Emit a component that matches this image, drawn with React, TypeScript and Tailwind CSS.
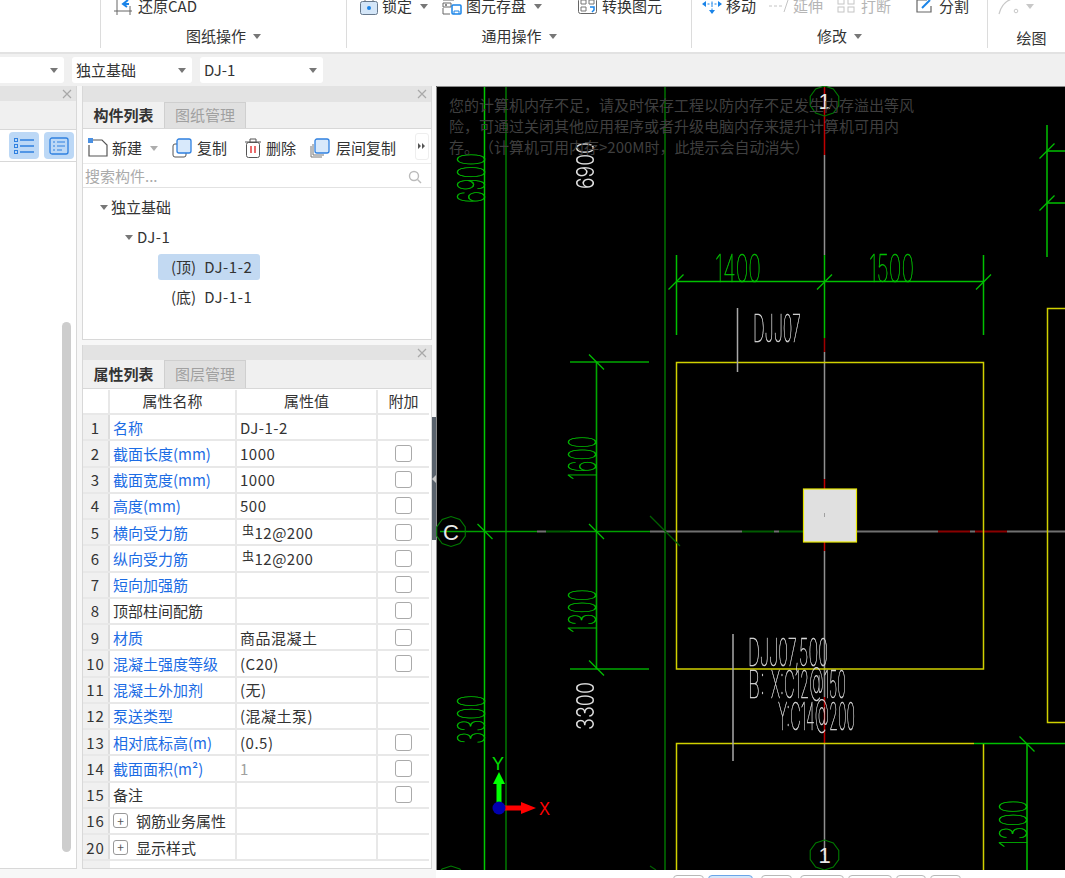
import type { ReactNode } from 'react';

const FONT = "font-['Noto_Sans_CJK_SC','Noto_Sans',sans-serif]";
const G = '#00c000';
const Y = '#d0d000';

type Row = { n: number; name: string; value?: string; check?: boolean; blue?: boolean; plus?: boolean; rebar?: boolean; muted?: boolean };

const rows: Row[] = [
  { n: 1, name: '名称', value: 'DJ-1-2', blue: true },
  { n: 2, name: '截面长度(mm)', value: '1000', check: true, blue: true },
  { n: 3, name: '截面宽度(mm)', value: '1000', check: true, blue: true },
  { n: 4, name: '高度(mm)', value: '500', check: true, blue: true },
  { n: 5, name: '横向受力筋', value: '12@200', check: true, blue: true, rebar: true },
  { n: 6, name: '纵向受力筋', value: '12@200', check: true, blue: true, rebar: true },
  { n: 7, name: '短向加强筋', check: true, blue: true },
  { n: 8, name: '顶部柱间配筋', check: true },
  { n: 9, name: '材质', value: '商品混凝土', check: true, blue: true },
  { n: 10, name: '混凝土强度等级', value: '(C20)', check: true, blue: true },
  { n: 11, name: '混凝土外加剂', value: '(无)', blue: true },
  { n: 12, name: '泵送类型', value: '(混凝土泵)', blue: true },
  { n: 13, name: '相对底标高(m)', value: '(0.5)', check: true, blue: true },
  { n: 14, name: '截面面积(m²)', value: '1', check: true, blue: true, muted: true },
  { n: 15, name: '备注', check: true },
  { n: 16, name: '钢筋业务属性', plus: true },
  { n: 20, name: '显示样式', plus: true },
];

function Caret({ className = '' }: { className?: string }) {
  return (
    <svg width="8" height="5" viewBox="0 0 8 5" className={className}>
      <path d="M0 0h8L4 5z" fill="#777" />
    </svg>
  );
}

function Close() {
  return (
    <svg width="10" height="10" viewBox="0 0 10 10" className="mr-[4px]">
      <path d="M1 1l8 8M9 1l-8 8" stroke="#a8a8a8" strokeWidth="1.2" />
    </svg>
  );
}

function PanelHeader({ className = 'h-[15px]' }: { className?: string }) {
  return (
    <div className={`flex items-center justify-end bg-[#e3e3e3] ${className}`}>
      <Close />
    </div>
  );
}

function Tabs({ first, second, className }: { first: string; second: string; className: string }) {
  return (
    <div className={`flex bg-[#f0f0f0] border-b border-[#d8d8d8] ${className}`}>
      <div className="flex w-[81px] items-center justify-center text-[15px] font-bold text-[#333]">{first}</div>
      <div className="flex w-[82px] items-center justify-center border border-b-0 border-[#cfcfcf] bg-[#e0e0e0] text-[15px] text-[#a0a0a0]">
        {second}
      </div>
    </div>
  );
}

function RibbonItem({ icon, label, muted, caret, className = '' }: { icon: ReactNode; label: string; muted?: boolean; caret?: boolean; className?: string }) {
  return (
    <div className={`flex items-center gap-[4px] whitespace-nowrap text-[15px] ${muted ? 'text-[#b5b5b5]' : 'text-[#333]'} ${className}`}>
      {icon}
      <span>{label}</span>
      {caret && <Caret className="ml-[4px]" />}
    </div>
  );
}

function GroupLabel({ text, caret = true }: { text: string; caret?: boolean }) {
  return (
    <div className="flex h-[24px] items-center justify-center gap-[7px] text-[15px] text-[#333]">
      <span>{text}</span>
      {caret && <Caret />}
    </div>
  );
}

const restoreIcon = (
  <svg width="18" height="20" viewBox="0 0 18 20" fill="none" className="mr-[2px]">
    <path d="M3 0v19M0 15h18M16 10v9" stroke="#666" />
    <path d="M14 4l-5 4 4 3M9 8h6" stroke="#1a84e8" strokeWidth="2" />
  </svg>
);
const lockIcon = (
  <svg width="18" height="20" viewBox="0 0 18 20" fill="none">
    <path d="M5 6V3a4 4 0 018 0v3" stroke="#777" />
    <rect x="0.5" y="5.5" width="17" height="13" rx="2" fill="#d4e6f8" stroke="#66788c" />
    <circle cx="9" cy="12" r="2" fill="#1a84e8" />
  </svg>
);
const storeIcon = (
  <svg width="20" height="20" viewBox="0 0 20 20" fill="none">
    <path d="M1 0h11v4H1zM1 7h8v4H1zM1 12v6h7" stroke="#666" />
    <circle cx="4" cy="9" r="1" fill="#666" />
    <rect x="10" y="9" width="9" height="9" rx="1" stroke="#1a84e8" strokeWidth="1.5" />
    <path d="M12 18v-3h5v3" stroke="#1a84e8" />
  </svg>
);
const convertIcon = (
  <svg width="20" height="20" viewBox="0 0 20 20" fill="none">
    <rect x="0.5" y="2.5" width="18" height="15" rx="2" stroke="#666" />
    <path d="M3 4h5v4H3zM11 4h5v4h-5zM3 11h5v4H3z" stroke="#777" />
    <path d="M12 11h4v3l-2 2" stroke="#1a84e8" strokeWidth="1.5" />
  </svg>
);
const moveIcon = (
  <svg width="20" height="16" viewBox="0 0 20 16" fill="none">
    <path d="M10 0v15M2 6h16" stroke="#1a84e8" strokeDasharray="2 1.5" />
    <path d="M0 6l4-3v6zM20 6l-4-3v6zM10 16l-3-4h6z" fill="#1a84e8" />
  </svg>
);
const extendIcon = (
  <svg width="20" height="14" viewBox="0 0 20 14" fill="none">
    <path d="M0 7h3M5 7h3M10 7h3M19 1l-4 12" stroke="#c4c4c4" />
  </svg>
);
const breakIcon = (
  <svg width="20" height="16" viewBox="0 0 20 16" fill="none">
    <rect x="1" y="1" width="6" height="5" stroke="#c4c4c4" />
    <rect x="11" y="1" width="6" height="5" stroke="#c4c4c4" />
    <rect x="1" y="9" width="6" height="5" stroke="#c4c4c4" />
    <rect x="11" y="9" width="6" height="5" stroke="#c4c4c4" />
  </svg>
);
const splitIcon = (
  <svg width="20" height="16" viewBox="0 0 20 16" fill="none">
    <path d="M12 2H2v12h14V8" stroke="#666" strokeWidth="1.2" />
    <path d="M7 10l8-8" stroke="#1a84e8" strokeWidth="2" />
  </svg>
);

function Ribbon() {
  const topRow = '-mt-[12px] flex h-[36px] items-center';
  return (
    <div className="flex h-[54px] shrink-0 overflow-hidden border-b-2 border-[#e2e2e2] bg-white">
      <div className="w-[101px] border-r border-[#dcdcdc] h-[48px]" />
      <div className="w-[246px] border-r border-[#dcdcdc] h-[48px]">
        <div className={`${topRow} pl-[13px]`}>
          <RibbonItem icon={restoreIcon} label="还原CAD" />
        </div>
        <GroupLabel text="图纸操作" />
      </div>
      <div className="w-[345px] border-r border-[#dcdcdc] h-[48px]">
        <div className={`${topRow} pl-[13px]`}>
          <RibbonItem icon={lockIcon} label="锁定" caret className="w-[82px]" />
          <RibbonItem icon={storeIcon} label="图元存盘" caret className="w-[136px]" />
          <RibbonItem icon={convertIcon} label="转换图元" />
        </div>
        <GroupLabel text="通用操作" />
      </div>
      <div className="w-[296px] border-r border-[#dcdcdc] h-[48px]">
        <div className={`${topRow} pl-[10px]`}>
          <RibbonItem icon={moveIcon} label="移动" className="w-[67px]" />
          <RibbonItem icon={extendIcon} label="延伸" muted className="w-[68px]" />
          <RibbonItem icon={breakIcon} label="打断" muted className="w-[78px]" />
          <RibbonItem icon={splitIcon} label="分割" />
        </div>
        <GroupLabel text="修改" />
      </div>
      <div className="flex-1">
        <div className={`${topRow} gap-[4px] pl-[10px]`}>
          <svg width="24" height="18" viewBox="0 0 24 18" fill="none">
            <path d="M1 17C3 9 7 4 14 2" stroke="#c8c8c8" strokeWidth="1.2" />
            <circle cx="18" cy="14" r="1.8" stroke="#c8c8c8" />
          </svg>
          <Caret className="opacity-40" />
        </div>
        <div className="mt-[2px] flex h-[24px] items-center justify-center pl-[10px] text-[15px] text-[#333]">绘图</div>
      </div>
    </div>
  );
}

function Select({ text, className }: { text?: string; className: string }) {
  return (
    <div className={`flex h-[26px] items-center justify-between rounded-[3px] bg-white pl-[4px] pr-[6px] text-[15px] text-[#333] ${className}`}>
      <span>{text}</span>
      <Caret />
    </div>
  );
}

function ComponentList() {
  const toolText = 'text-[15px] text-[#333] whitespace-nowrap';
  return (
    <section className="h-[254px] border-x border-b border-[#d8d8d8] bg-white flex flex-col">
      <PanelHeader className="h-[16px]" />
      <Tabs first="构件列表" second="图纸管理" className="h-[27px]" />
      <div className="flex h-[35px] items-center border-b border-[#ececec] pl-[5px] pt-[4px]">
        <svg width="20" height="20" viewBox="0 0 20 20" fill="none">
          <path d="M4 2h10l5 5v11H1V7" stroke="#555" strokeWidth="1.2" />
          <rect x="0" y="0" width="5" height="5" fill="#4a90e2" />
        </svg>
        <span className={`ml-[4px] ${toolText}`}>新建</span>
        <Caret className="ml-[8px] opacity-60" />
        <svg width="20" height="20" viewBox="0 0 20 20" fill="none" className="ml-[14px]">
          <rect x="1" y="6" width="13" height="13" rx="2" stroke="#555" />
          <rect x="5" y="1" width="14" height="14" rx="2" fill="#d8e9fb" stroke="#2f80e0" strokeWidth="1.3" />
        </svg>
        <span className={`ml-[5px] ${toolText}`}>复制</span>
        <svg width="18" height="20" viewBox="0 0 18 20" fill="none" className="ml-[17px]">
          <path d="M1 4h16M6 4V1h6v3" stroke="#555" />
          <rect x="2.5" y="4.5" width="13" height="15" rx="2" stroke="#555" />
          <path d="M7 8v7M11 8v7" stroke="#e03030" strokeWidth="1.4" />
        </svg>
        <span className={`ml-[4px] ${toolText}`}>删除</span>
        <svg width="20" height="20" viewBox="0 0 20 20" fill="none" className="ml-[14px]">
          <path d="M1 8v11h11M3 6v11h11" stroke="#777" />
          <rect x="5" y="1" width="14" height="14" rx="2" fill="#d8e9fb" stroke="#2f80e0" strokeWidth="1.3" />
        </svg>
        <span className={`ml-[6px] ${toolText}`}>层间复制</span>
        <div className="ml-[19px] flex h-[27px] w-[14px] -translate-y-[2px] items-center justify-center rounded-[3px] border border-[#eeeeee] bg-white">
          <svg width="8" height="6" viewBox="0 0 8 6">
            <path d="M0 0l3 3-3 3zM4 0l3 3-3 3z" fill="#555" />
          </svg>
        </div>
      </div>
      <div className="flex h-[24px] items-center justify-between border-b border-[#e2e2e2] pl-[2px] pr-[9px] pt-[2px]">
        <span className="text-[15px] text-[#aaaaaa]">搜索构件...</span>
        <svg width="14" height="14" viewBox="0 0 14 14" fill="none">
          <circle cx="6" cy="6" r="4.5" stroke="#bbbbbb" strokeWidth="1.4" />
          <path d="M9.5 9.5L13 13" stroke="#bbbbbb" strokeWidth="1.4" />
        </svg>
      </div>
      <div className="flex flex-col pt-[4px] text-[15px] text-[#333]">
        <div className="flex h-[30px] items-center gap-[3px] pl-[17px]">
          <Caret />
          <span>独立基础</span>
        </div>
        <div className="flex h-[30px] items-center gap-[4px] pl-[42px]">
          <Caret />
          <span className="tracking-[0.5px]">DJ-1</span>
        </div>
        <div className="flex h-[30px] items-center pl-[75px]">
          <span className="flex h-[26px] w-[102px] items-center rounded-[3px] bg-[#c2d9f2] pl-[13px]">
            (顶)<span className="ml-[8px] tracking-[0.6px]">DJ-1-2</span>
          </span>
        </div>
        <div className="flex h-[30px] items-center pl-[88px]">
          (底)<span className="ml-[8px] tracking-[0.6px]">DJ-1-1</span>
        </div>
      </div>
    </section>
  );
}

function PropertyRow({ row }: { row: Row }) {
  return (
    <div className="grid h-[26.25px] w-[346px] grid-cols-[27px_127px_141px_51px] border-b-2 border-[#e8e8e8] text-[15px] leading-none">
      <div className="flex items-center justify-center border-r-2 border-[#dddddd] bg-[#f0f0f0] tracking-[1px] text-[#333]">{row.n}</div>
      <div className={`flex items-center border-r-2 border-[#e8e8e8] pl-[3px] whitespace-nowrap ${row.blue ? 'text-[#1c6ce4]' : 'text-[#333]'}`}>
        {row.plus && (
          <span className="mr-[8px] flex h-[15px] w-[15px] items-center justify-center rounded-[3px] border border-[#999] text-[12px] text-[#555]">+</span>
        )}
        {row.name}
      </div>
      <div className={`flex items-center border-r-2 border-[#e8e8e8] pl-[3px] ${row.muted ? 'text-[#a0a0a0]' : 'text-[#333]'} tracking-[0.5px]`}>
        {row.rebar && <span className="ml-[2px] -mt-[4px] text-[12px]">虫</span>}
        {row.value}
      </div>
      <div className="flex items-center justify-center">
        {row.check && <span className="h-[17px] w-[17px] rounded-[3px] border border-[#aaaaaa] bg-white" />}
      </div>
    </div>
  );
}

function PropertyList() {
  return (
    <section className="mt-[5px] flex h-[524px] flex-col border-x border-b border-[#d8d8d8] bg-white">
      <PanelHeader />
      <Tabs first="属性列表" second="图层管理" className="h-[29px]" />
      <div className="grid h-[26px] w-[346px] grid-cols-[27px_127px_141px_51px] border-b-2 border-[#e8e8e8] pt-[1px] text-[15px] text-[#333]">
        <div className="border-r-2 border-[#e8e8e8]" />
        <div className="flex items-center justify-center border-r-2 border-[#e8e8e8]">属性名称</div>
        <div className="flex items-center justify-center border-r-2 border-[#e8e8e8]">属性值</div>
        <div className="flex items-center justify-center">附加</div>
      </div>
      {rows.map((r) => (
        <PropertyRow key={r.n} row={r} />
      ))}
      <div className="w-[27px] flex-1 bg-[#f0f0f0]" />
    </section>
  );
}

function Slash({ x, y, r = 7.5, c = G, w = 1.3 }: { x: number; y: number; r?: number; c?: string; w?: number }) {
  return <line x1={x - r} y1={y + r} x2={x + r} y2={y - r} stroke={c} strokeWidth={w} />;
}

function BackSlash({ x, y, r = 7.5, c = G }: { x: number; y: number; r?: number; c?: string }) {
  return <line x1={x - r} y1={y - r} x2={x + r} y2={y + r} stroke={c} strokeWidth="1.3" />;
}

function CadText({ x, y, len, size, text, color = G, rotate = false, weight = 100, bold = 0.5 }: { x: number; y: number; len: number; size: number; text: string; color?: string; rotate?: boolean; weight?: number; bold?: number }) {
  return (
    <text
      transform={`translate(${x} ${y})${rotate ? ' rotate(-90)' : ''}`}
      textLength={len}
      lengthAdjust="spacingAndGlyphs"
      fontSize={size}
      fontWeight={weight}
      fontFamily="Inter, 'Liberation Sans', sans-serif"
      fill={color}
      stroke={color}
      strokeWidth={bold}
      className="blur-[0.3px]"
    >
      {text}
    </text>
  );
}

function AxisBubble({ x, y, label }: { x: number; y: number; label: string }) {
  const points = Array.from({ length: 10 }, (_, i) => {
    const a = (i * Math.PI) / 5 + Math.PI / 10;
    return `${x + 15 * Math.cos(a)},${y + 15 * Math.sin(a)}`;
  }).join(' ');
  return (
    <g>
      <polygon points={points} fill="none" stroke="#007a00" strokeWidth="1.1" />
      <text x={x} y={y + 8} textAnchor="middle" fontSize="22" fontFamily="'Liberation Sans', sans-serif" fill="#e8e8e8">
        {label}
      </text>
    </g>
  );
}

function CadDrawing() {
  return (
    <svg viewBox="436 86 629 784" className="block h-full w-full">
      <rect x="436" y="86" width="629" height="784" fill="#000" />
      <path d="M436.5 870V86.5H1065" fill="none" stroke="#8a8a8a" />
      {/* grid lines */}
      <path d="M484.5 87V870" stroke="#00c800" strokeWidth="1.5" />
      <path d="M506 87V870" stroke="#007800" strokeWidth="1.5" />
      <path d="M665 87V870" stroke="#005f00" strokeWidth="1.8" />

      {/* vertical axis */}
      <path d="M824.5 87V155" stroke="#c00000" strokeWidth="1.5" />
      <path d="M824.5 155V255" stroke="#909090" strokeWidth="1.5" />
      <path d="M824.5 255V338" stroke={G} strokeWidth="1.5" />
      <path d="M824.5 338V352" stroke="#a00000" strokeWidth="1.5" />
      <path d="M824.5 352V479M824.5 551V697M824.5 743V855" stroke="#909090" strokeWidth="1.5" />
      <path d="M824.5 479V489M824.5 542V551M824.5 697V743" stroke="#c00000" strokeWidth="1.5" />

      {/* horizontal axis */}
      <path d="M440 531.5H537M570 531.5H650" stroke="#00a000" strokeWidth="1.5" />
      <path d="M546 531.5H570M742 531.5H774M779 531.5H803" stroke="#005a00" strokeWidth="1.8" />
      <path d="M537 531.5H546M650 531.5H742M774 531.5H779M856 531.5H938M970 531.5H975M1007 531.5H1065" stroke="#707070" strokeWidth="1.8" />
      <path d="M938 531.5H970M975 531.5H1007" stroke="#8a0000" strokeWidth="2" />

      {/* footings */}
      <path d="M676.5 362.5H983.5V669H676.5Z" fill="none" stroke={Y} strokeWidth="1.5" />
      <path d="M676.5 870V743.5H974M983.5 743.5V870" fill="none" stroke={Y} strokeWidth="1.5" />
      <path d="M1065 308.5H1047.5V722.5H1065" fill="none" stroke={Y} strokeWidth="1.5" />
      <path d="M974 743.5H1065M1027 743.5V870" stroke={G} strokeWidth="1.5" />
      <BackSlash x={1027} y={744} />

      {/* dimensions */}
      <path d="M676.5 255V335M983.5 255V335M676 281.5H984" stroke={G} strokeWidth="1.5" />
      <Slash x={676} y={282} />
      <Slash x={824.5} y={282} />
      <Slash x={983.5} y={282} />
      <CadText x={715} y={282} len={46} size={38} text="1400" />
      <CadText x={869} y={282} len={45} size={38} text="1500" />

      <path d="M596.5 362V669M570 362H649M570 669H649" stroke="#00a800" strokeWidth="1.6" />
      <BackSlash x={596.5} y={362} />
      <BackSlash x={596.5} y={531.5} />
      <BackSlash x={596.5} y={668} />
      <BackSlash x={485} y={531.5} />
      <line x1="650" y1="516" x2="680" y2="546" stroke="#006000" strokeWidth="1.2" />
      <line x1="650" y1="866" x2="656" y2="870" stroke="#006000" strokeWidth="1.2" />
      <CadText x={596} y={480} len={44} size={38} text="1600" rotate />
      <CadText x={596} y={633} len={44} size={38} text="1300" rotate />
      <CadText x={485} y={203} len={50} size={38} text="6900" rotate />
      <CadText x={485} y={744} len={49} size={38} text="3300" rotate />
      <CadText x={1027} y={848} len={48} size={38} text="1300" rotate />
      <CadText x={594} y={189} len={47} size={24} text="6900" color="#e0e0e0" rotate weight={300} bold={0} />
      <CadText x={594} y={730} len={48} size={24} text="3300" color="#e0e0e0" rotate weight={300} bold={0} />

      <path d="M1047 125V257M1047 151H1065M1047 203H1065" stroke={G} strokeWidth="1.5" />
      <Slash x={1047} y={151} />
      <Slash x={1047} y={203} />

      {/* column */}
      <rect x="803.5" y="489" width="53" height="53" fill="#e0e0e0" stroke="#e6e600" strokeWidth="1.2" />
      <path d="M824.5 513V517" stroke="#a0a0a0" />

      {/* labels */}
      <path d="M737.5 308V372M733 634V761" stroke="#a8a8a8" strokeWidth="1.5" />
      <CadText x={753} y={342} len={48} size={38} text="DJJ07" color="#d8d8d8" />
      <CadText x={748} y={666} len={80} size={38} text="DJJ07,500" color="#d8d8d8" />
      <CadText x={748} y={698} len={17} size={38} text="B:" color="#d8d8d8" />
      <CadText x={771} y={698} len={75} size={38} text="X:C12@150" color="#d8d8d8" />
      <CadText x={778} y={730} len={77} size={38} text="Y:C14@200" color="#d8d8d8" />

      <AxisBubble x={824.5} y={101} label="1" />
      <AxisBubble x={824.5} y={855} label="1" />
      <AxisBubble x={451} y={531.5} label="C" />
      <AxisBubble x={451} y={881} label="" />

      {/* ucs */}
      <path d="M499 808V784" stroke="#00ff00" strokeWidth="5" />
      <path d="M499 772l6 12h-12z" fill="#00ff00" />
      <path d="M499 808H521" stroke="#ff0000" strokeWidth="5" />
      <path d="M536 808l-15-6v12z" fill="#ff0000" />
      <circle cx="499" cy="808" r="6.5" fill="#0000b0" />
      <text x="492" y="770" fontSize="18" fontFamily="'Liberation Sans', sans-serif" fill="#00e000" textLength="12" lengthAdjust="spacingAndGlyphs">Y</text>
      <text x="539" y="815" fontSize="18" fontFamily="'Liberation Sans', sans-serif" fill="#ff0000" textLength="11" lengthAdjust="spacingAndGlyphs">X</text>
    </svg>
  );
}

export default function App() {
  return (
    <div className={`flex h-[878px] w-[1065px] flex-col overflow-hidden bg-[#f7f7f7] ${FONT}`}>
      <Ribbon />
      <div className="flex h-[32px] shrink-0 items-center gap-[8px] bg-[#f0f0f0]">
        <Select className="-ml-[2px] w-[66px]" />
        <Select text="独立基础" className="w-[120px]" />
        <Select text="DJ-1" className="w-[123px]" />
      </div>
      <div className="flex min-h-0 flex-1">
        <aside className="relative flex h-[783px] w-[77px] shrink-0 flex-col border-r border-b border-[#d8d8d8] bg-white">
          <PanelHeader />
          <div className="h-[29px] border-b border-[#d8d8d8] bg-[#f0f0f0]" />
          <div className="flex h-[32px] items-center gap-[5px] border-b border-[#d8d8d8] pl-[9px]">
            <span className="flex h-[27px] w-[30px] items-center justify-center rounded-[4px] bg-[#bcd8f6]">
              <svg width="20" height="16" viewBox="0 0 20 16" fill="none" stroke="#2f80e0">
                <path d="M6 2h14M6 8h14M6 14h14" strokeWidth="1.3" />
                <rect x="0.5" y="0.5" width="3" height="3" />
                <rect x="0.5" y="6.5" width="3" height="3" />
                <rect x="0.5" y="12.5" width="3" height="3" />
              </svg>
            </span>
            <span className="flex h-[27px] w-[30px] items-center justify-center rounded-[4px] bg-[#bcd8f6]">
              <svg width="20" height="18" viewBox="0 0 20 18" fill="none" stroke="#2f80e0">
                <rect x="1" y="1" width="18" height="16" rx="2" strokeWidth="1.3" />
                <path d="M4 5h2M8 5h8M4 9h2M8 9h8M4 13h2M8 13h5" />
              </svg>
            </span>
          </div>
          <div className="absolute left-[62px] top-[236px] h-[530px] w-[9px] rounded-[5px] bg-[#cdcdcd]" />
        </aside>
        <div className="ml-[5px] w-[350px] shrink-0">
          <ComponentList />
          <PropertyList />
        </div>
        <div className="flex w-[4px] shrink-0 flex-col">
          <div className="mt-[331px] flex h-[123px] items-center justify-center bg-[#59626c]">
            <span className="h-0 w-0 border-y-[4px] border-r-[4px] border-y-transparent border-r-[#c8c8c8]" />
          </div>
        </div>
        <div className="flex min-w-0 flex-1 flex-col bg-white">
          <div className="relative h-[784px] shrink-0">
            <CadDrawing />
            <div className="absolute left-[13px] top-[8px] w-[470px] text-[15px] leading-[21px] text-[#3f3f3f] [text-spacing-trim:space-all]">
              您的计算机内存不足，请及时保存工程以防内存不足发生内存溢出等风险，可通过关闭其他应用程序或者升级电脑内存来提升计算机可用内存。（计算机可用内存&gt;200M时，此提示会自动消失）
            </div>
          </div>
          <div className="flex gap-[4px] pl-[237px] pt-[5px]">
            <span className="h-[12px] w-[31px] rounded-t-[4px] border border-[#b8b8b8] bg-white" />
            <span className="h-[12px] w-[45px] rounded-t-[4px] border border-[#6aa5e8] bg-[#d6e7fa]" />
            <span className="ml-[4px] h-[12px] w-[31px] rounded-t-[4px] border border-[#b8b8b8] bg-white" />
            <span className="ml-[4px] h-[12px] w-[44px] rounded-t-[4px] border border-[#b8b8b8] bg-white" />
            <span className="h-[12px] w-[44px] rounded-t-[4px] border border-[#b8b8b8] bg-white" />
            <span className="h-[12px] w-[30px] rounded-t-[4px] border border-[#b8b8b8] bg-white" />
            <span className="h-[12px] w-[31px] rounded-t-[4px] border border-[#b8b8b8] bg-white" />
          </div>
        </div>
      </div>
    </div>
  );
}
